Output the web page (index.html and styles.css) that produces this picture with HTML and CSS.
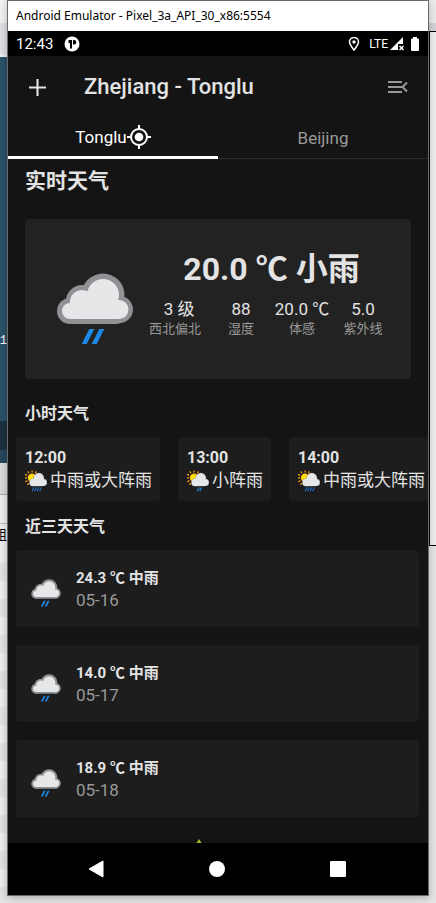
FILE: index.html
```html
<!DOCTYPE html>
<html lang="zh-CN">
<head>
<meta charset="utf-8">
<meta name="viewport" content="width=device-width, initial-scale=1">
<title>Android Emulator - Pixel_3a_API_30_x86:5554</title>
<link rel="stylesheet" href="styles.css">
</head>
<body>
<svg class="sprites" aria-hidden="true">
  <symbol id="rain" viewBox="0 0 76 72">
    <g fill="#8f9194"><circle cx="46" cy="22" r="21.5"/><circle cx="25" cy="28" r="16"/><circle cx="13" cy="38" r="13"/><circle cx="62.500" cy="36.500" r="13.500"/><rect x="6" y="30" width="64" height="21" rx="10"/></g>
    <g fill="#e6e7e9"><circle cx="46" cy="22" r="16"/><circle cx="25" cy="29" r="12"/><circle cx="13" cy="38" r="8"/><circle cx="62" cy="36.500" r="9.500"/><rect x="9" y="30" width="58" height="16" rx="8"/></g>
    <path fill="#1e88e5" d="M32.300 56h5L29.700 71h-5zM42.300 56h5L39.700 71h-5z"/>
  </symbol>
  <symbol id="sun-cloud" viewBox="0 0 62 60">
    <g stroke="#ffa000" stroke-width="3.500"><path d="M20 0v6M8 3l3 5M32 3l-3 5M0 11l6 3M0 21h6M1 32l6-3M7 41l4-5M36 9l-4 3"/></g>
    <circle cx="20" cy="21" r="12" fill="#ffca12"/><circle cx="17" cy="20" r="7" fill="#ffe000"/>
    <g fill="#8f9194"><circle cx="39" cy="22" r="15"/><circle cx="23" cy="34" r="11"/><circle cx="52" cy="34" r="10"/><rect x="18" y="32" width="38" height="13" rx="6"/></g>
    <g fill="#e6e7e9"><circle cx="39" cy="22" r="14"/><circle cx="23" cy="34" r="10"/><circle cx="52" cy="34" r="9"/><rect x="18" y="31" width="38" height="13" rx="6"/></g>
  </symbol>
</svg>

<div class="desktop desktop-left" aria-hidden="true">
  <div class="strip light"></div><div class="strip tabbar"></div><div class="strip wallpaper"><span class="shell"><b>4</b>1</span></div><div class="strip navy"></div><div class="strip wallpaper-end"></div><div class="strip toolbar"></div><div class="strip panel"></div><div class="strip group">组</div><div class="strip rows"></div>
</div>

<main class="window">
  <header class="titlebar">Android Emulator - Pixel_3a_API_30_x86:5554</header>
  <div class="status">
    <span>12:43</span>
    <svg class="status-app" viewBox="0 0 16 16"><circle cx="8" cy="8" r="7.500" fill="#fff"/><path fill="#000" d="M4.500 4H8v8.500H6V7H4.500zM9 4h1a2.300 2.300 0 0 1 0 4.600H9z"/></svg>
    <svg class="status-pin" viewBox="0 0 12 14"><path fill="none" stroke="#fff" stroke-width="1.500" d="M6 13C4 10.500 1.500 7.500 1.500 5a4.500 4.500 0 0 1 9 0C10.500 7.500 8 10.500 6 13z"/><circle cx="6" cy="5" r="1.700" fill="#fff"/></svg>
    <span class="lte">LTE</span>
    <svg class="status-signal" viewBox="0 0 14 14"><path fill="#fff" d="M0 13L13 0v7H8v6z"/><path stroke="#fff" stroke-width="1.500" d="M9.500 9l4 4M13.500 9l-4 4"/></svg>
    <svg class="status-battery" viewBox="0 0 8 14"><path fill="#fff" d="M2 0h4v1.500h1q1 0 1 1V13q0 1-1 1H1q-1 0-1-1V2.500q0-1 1-1h1z"/></svg>
  </div>
  <div class="appbar">
    <button class="icon-button" aria-label="Add city"><svg class="add" viewBox="0 0 16 16"><path stroke="#e3e3e3" stroke-width="2" d="M8 0v16M0 8h16"/></svg></button>
    <h1>Zhejiang - Tonglu</h1>
    <button class="icon-button" aria-label="Menu"><svg class="menu" viewBox="0 0 20 14"><path fill="none" stroke="#999" stroke-width="2" d="M0 2h14M0 7h14M0 12h14M19 2.500L14.500 7l4.500 4.500"/></svg></button>
  </div>
  <nav class="tabs">
    <button class="tab active">Tonglu<svg viewBox="0 0 24 24"><circle cx="12" cy="12" r="8" fill="none" stroke="#fff" stroke-width="2"/><circle cx="12" cy="12" r="4.300" fill="#fff"/><path stroke="#fff" stroke-width="2" d="M12 0v4M12 20v4M0 12h4M20 12h4"/></svg></button>
    <button class="tab">Beijing</button>
  </nav>
  <div class="content">
    <h2 class="heading-large">实时天气</h2>
    <section class="current">
      <svg class="current-icon"><use href="#rain"/></svg>
      <div class="current-info">
        <div class="temperature">20.0 <span class="unit">℃</span> 小雨</div>
        <dl class="stats">
          <div><dd>&nbsp;&nbsp;3 级</dd><dt>西北偏北</dt></div>
          <div><dd>88</dd><dt>湿度</dt></div>
          <div><dd>20.0 <span class="unit">℃</span></dd><dt>体感</dt></div>
          <div><dd>5.0</dd><dt>紫外线</dt></div>
        </dl>
      </div>
    </section>
    <h3 class="heading-hours">小时天气</h3>
    <div class="hours">
      <article class="hour"><strong>12:00</strong><p><svg viewBox="0 0 62 60"><use href="#sun-cloud"/><path stroke="#1e78d0" stroke-width="3" d="M25 48l-5 11M32 48l-5 11M39 48l-5 11M46 48l-5 11"/></svg>中雨或大阵雨</p></article>
      <article class="hour"><strong>13:00</strong><p><svg viewBox="0 0 62 60"><use href="#sun-cloud"/><path stroke="#1e88e5" stroke-width="3.500" d="M34 48l-5 11M41 48l-5 11"/></svg>小阵雨</p></article>
      <article class="hour"><strong>14:00</strong><p><svg viewBox="0 0 62 60"><use href="#sun-cloud"/><path stroke="#1e78d0" stroke-width="3" d="M25 48l-5 11M32 48l-5 11M39 48l-5 11M46 48l-5 11"/></svg>中雨或大阵雨</p></article>
    </div>
    <h3 class="heading-days">近三天天气</h3>
    <div class="days">
      <article class="day"><svg><use href="#rain"/></svg><div><strong>24.3 <span class="unit">℃</span> 中雨</strong><time>05-16</time></div></article>
      <article class="day"><svg><use href="#rain"/></svg><div><strong>14.0 <span class="unit">℃</span> 中雨</strong><time>05-17</time></div></article>
      <article class="day"><svg><use href="#rain"/></svg><div><strong>18.9 <span class="unit">℃</span> 中雨</strong><time>05-18</time></div></article>
    </div>
    <svg class="sunrise" viewBox="0 0 24 24"><path fill="#afb42b" d="M12 0l5 8H7z"/><circle cx="12" cy="14" r="7" fill="#afb42b"/></svg>
  </div>
  <nav class="system-nav">
    <button aria-label="Back"><svg viewBox="0 0 18 18"><path fill="#fff" stroke="#fff" stroke-linejoin="round" d="M2 9L16 1v16z"/></svg></button>
    <button aria-label="Home"><svg viewBox="0 0 18 18"><circle cx="9" cy="9" r="8" fill="#fff"/></svg></button>
    <button aria-label="Recent apps"><svg viewBox="0 0 18 18"><rect x="1" y="1" width="16" height="16" rx="1" fill="#fff"/></svg></button>
  </nav>
</main>

<div class="desktop desktop-right" aria-hidden="true"><div class="right-tab"></div><div class="right-panel"></div></div>
</body>
</html>
```
FILE: styles.css
```css
* { box-sizing: border-box; }
body {
  margin: 0;
  height: 100vh;
  display: grid;
  grid-template-columns: 7px minmax(0, 1fr) 7px;
  overflow: hidden;
  background: #e6e6e6;
  color: #e3e3e3;
  font-family: Roboto, "Noto Sans CJK SC", sans-serif;
}
h1, h2, h3, p, dl, dd { margin: 0; }
button { border: 0; padding: 0; background: none; color: inherit; font: inherit; }
svg { display: block; flex: none; }
.sprites { position: absolute; width: 0; height: 0; }

.desktop { display: flex; flex-direction: column; overflow: hidden; }
.strip { flex: none; overflow: hidden; }
.light { height: 23px; background: #f3f3f3; }
.tabbar { height: 34px; background: #dfe0e5; border-bottom: 3px solid #eee; }
.wallpaper { height: 364px; background: #2b5269; display: flex; justify-content: flex-end; align-items: flex-end; padding-bottom: 72px; }
.shell { color: #fff; font: 12px/16px "Liberation Mono", monospace; }
.shell b { color: #e0412f; font-weight: 400; }
.navy { height: 29px; background: #1b303e; }
.wallpaper-end { height: 13px; background: #25485d; }
.toolbar { height: 32px; background: #dadada; border-bottom: 1px solid #aaa; }
.panel { height: 29px; background: #eee; border-bottom: 1px solid #bbb; }
.group { height: 21px; background: #eee; color: #000; font-size: 13px; line-height: 21px; display: flex; justify-content: flex-end; }
.rows { flex: 1; background: repeating-linear-gradient(#eee 0 18px, #e4e4e4 18px 36px); }
.right-tab { height: 31px; background: linear-gradient(#ececec 23px, #d5d5d9 23px); }
.right-panel { height: 515px; background: #f0f0f0; border: solid #000; border-width: 1px 0 1px 1px; }

.window {
  position: relative;
  display: flex;
  flex-direction: column;
  min-height: 0;
  margin-bottom: 7px;
  border: 1px solid #6b6b6b;
  background: #141414;
  box-shadow: 0 2px 8px rgba(0, 0, 0, 0.25);
}
.titlebar { flex: none; height: 30px; padding-left: 8px; background: #fff; color: #000; font: 12px/30px "Noto Sans", sans-serif; white-space: nowrap; }
.status { flex: none; height: 25px; padding: 0 9px 0 8px; background: #000; color: #fff; display: flex; align-items: center; font-size: 15px; }
.status-app { width: 16px; height: 16px; margin-left: 11px; }
.status-pin { width: 12px; height: 14px; margin-left: auto; }
.lte { margin-left: 9px; font-size: 12px; }
.status-signal { width: 14px; height: 14px; margin-left: 2px; }
.status-battery { width: 8px; height: 14px; margin-left: 7px; }

.appbar { flex: none; height: 62px; padding: 0 20px 0 21px; display: flex; align-items: center; }
.appbar h1 { flex: 1; margin-left: 38px; font-size: 22px; font-weight: 500; line-height: 28px; }
.add { width: 17px; height: 17px; }
.menu { width: 20px; height: 14px; }
.tabs { flex: none; height: 41px; display: grid; grid-template-columns: 1fr 1fr; border-bottom: 1px solid #2d2d2d; }
.tab { display: flex; justify-content: center; align-items: center; font-size: 17px; color: #999; }
.tab.active { margin-bottom: -1px; border-bottom: 3px solid #fff; color: #fff; }
.tab svg { width: 24px; height: 24px; }

.content { flex: 1; min-height: 0; overflow: hidden; }
.unit { font-family: "Noto Sans CJK SC", sans-serif; line-height: 1; }
.heading-large { padding: 6px 17px 0; font-size: 21px; line-height: 32px; font-weight: 700; }
.current { height: 160px; margin: 22px 17px 0; padding-right: 18px; border-radius: 4px; background: #222; display: flex; }
.current-icon { width: 76px; height: 72px; margin: 54px 6px 0 32px; }
.current-info { flex: 1; padding-top: 30px; text-align: center; }
.temperature { padding-left: 11px; font-size: 32px; line-height: 40px; font-weight: 700; }
.stats { display: grid; grid-template-columns: 72fr 60fr 62fr 60fr; margin-top: 10px; }
.stats > div { display: flex; flex-direction: column; white-space: nowrap; }
.stats dd { font-size: 17px; line-height: 21px; }
.stats dt { font-size: 13px; line-height: 18px; color: #999; }
.heading-hours, .heading-days { padding: 0 17px; font-size: 16px; line-height: 24px; font-weight: 700; }
.heading-hours { margin-top: 23px; }
.hours { display: flex; gap: 18px; margin-top: 11px; padding-left: 8px; overflow: hidden; }
.hour { flex: none; height: 64px; padding: 10px 8px 0 9px; border-radius: 4px; background: #1d1d1d; }
.hour strong { display: block; font-size: 16px; line-height: 22px; }
.hour p { display: flex; align-items: center; gap: 3px; font-size: 17px; line-height: 23px; }
.hour svg { width: 22px; height: 22px; }
.heading-days { margin-top: 14px; }
.days { display: flex; flex-direction: column; gap: 18px; margin-top: 11px; padding: 0 9px 0 8px; }
.day { height: 77px; display: flex; gap: 15px; align-items: center; padding: 0 15px; border-radius: 4px; background: #1d1d1d; }
.day svg { width: 30px; height: 28px; margin-top: 8px; }
.day strong { display: block; font-size: 15px; line-height: 22px; }
.day time { display: block; font-size: 17px; line-height: 22px; color: #999; }
.sunrise { width: 24px; height: 24px; margin: 22px 0 0 179px; }

.system-nav { flex: none; height: 52px; padding: 0 30px 0 27px; background: #000; display: grid; grid-template-columns: repeat(3, 1fr); }
.system-nav button { display: grid; place-items: center; }
.system-nav svg { width: 18px; height: 18px; }
```
